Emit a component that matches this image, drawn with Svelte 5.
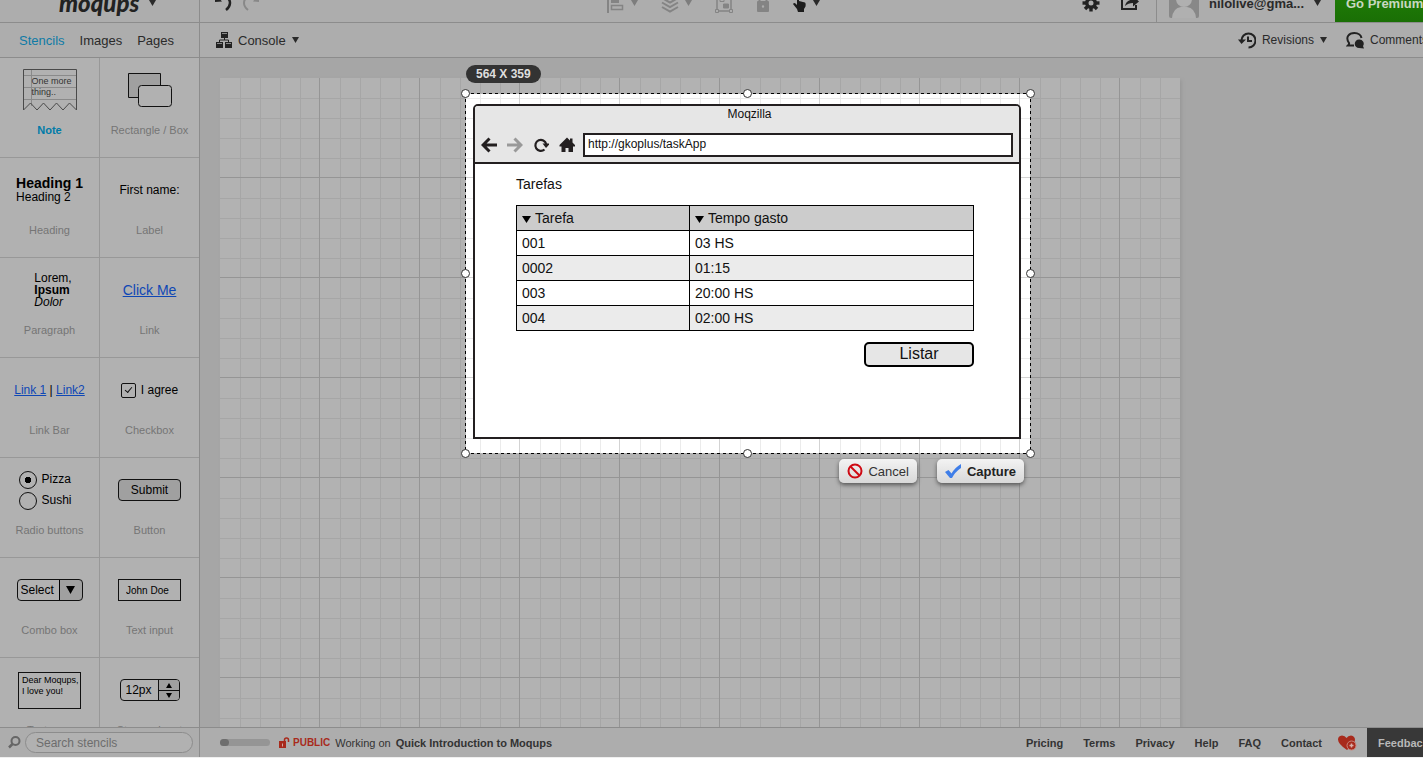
<script lang="ts">
  const rows = [
    ['001', '03 HS'],
    ['0002', '01:15'],
    ['003', '20:00 HS'],
    ['004', '02:00 HS']
  ];
  const handles = ['nw', 'n', 'ne', 'w', 'e', 'sw', 's', 'se'];
  const footerLinks = ['Pricing', 'Terms', 'Privacy', 'Help', 'FAQ', 'Contact'];
</script>

{#snippet caret()}
  <svg class="caret" width="7" height="6" viewBox="0 0 7 6" aria-hidden="true"><path d="M0 0h7L3.500 6z" fill="currentColor" /></svg>
{/snippet}

<div class="viewport">
  <div class="app">
    <aside class="sidebar">
      <div class="brand bar-top">
        <div class="bar-inner brand-inner">
          <span class="logo">moqups</span>
          {@render caret()}
        </div>
      </div>
      <nav class="tabs">
        <a href="#stencils" class="active">Stencils</a>
        <a href="#images">Images</a>
        <a href="#pages">Pages</a>
      </nav>

      <div class="stencils">
        <div class="cell">
          <div class="preview">
            <div class="note">
              <svg width="54" height="44" viewBox="0 0 54 44" fill="none" stroke="#4a4a4a" aria-hidden="true">
                <path d="M1 7.500h52M1 19.500h52M1 31.500h52M8.500 1v37" stroke="#8a8a8a" />
                <path d="M.5 42V1.500h53V42l-7-7-6.500 7-6.500-7-6.500 7-6.500-7-6.500 7-6.500-7z" />
              </svg>
              <span>One more<br />thing..</span>
            </div>
          </div>
          <div class="caption selected">Note</div>
        </div>
        <div class="cell">
          <div class="preview">
            <svg width="46" height="36" viewBox="0 0 46 36" stroke="#111" aria-hidden="true">
              <path d="M1.500 1.500h32v24h-32z" fill="#a0a0a0" />
              <rect x="11.500" y="13.500" width="33" height="21" rx="3" fill="#b1b1b1" />
            </svg>
          </div>
          <div class="caption">Rectangle / Box</div>
        </div>

        <div class="cell">
          <div class="preview"><div class="headings"><b>Heading 1</b><span>Heading 2</span></div></div>
          <div class="caption">Heading</div>
        </div>
        <div class="cell">
          <div class="preview small">First name:</div>
          <div class="caption">Label</div>
        </div>

        <div class="cell">
          <div class="preview"><p class="para">Lorem,<br /><b>Ipsum</b><br /><i>Dolor</i></p></div>
          <div class="caption">Paragraph</div>
        </div>
        <div class="cell">
          <div class="preview"><a class="demo big" href="#link">Click Me</a></div>
          <div class="caption">Link</div>
        </div>

        <div class="cell">
          <div class="preview small"><span><a class="demo" href="#link1">Link 1</a> | <a class="demo" href="#link2">Link2</a></span></div>
          <div class="caption">Link Bar</div>
        </div>
        <div class="cell">
          <div class="preview small">
            <label class="check"><input type="checkbox" checked /><span>I agree</span></label>
          </div>
          <div class="caption">Checkbox</div>
        </div>

        <div class="cell">
          <div class="preview small">
            <div class="radios">
              <label><input type="radio" name="food" checked />Pizza</label>
              <label><input type="radio" name="food" />Sushi</label>
            </div>
          </div>
          <div class="caption">Radio buttons</div>
        </div>
        <div class="cell">
          <div class="preview"><button class="submit" type="button">Submit</button></div>
          <div class="caption">Button</div>
        </div>

        <div class="cell">
          <div class="preview"><select class="combo" aria-label="Combo box"><option>Select</option></select></div>
          <div class="caption">Combo box</div>
        </div>
        <div class="cell">
          <div class="preview"><input class="text-in" aria-label="Text input" value="John Doe" /></div>
          <div class="caption">Text input</div>
        </div>

        <div class="cell">
          <div class="preview"><textarea class="area" aria-label="Text area" value={'Dear Moqups,\nI love you!'}></textarea></div>
          <div class="caption">Text area</div>
        </div>
        <div class="cell">
          <div class="preview">
            <div class="stepper">
              <input aria-label="Size" value="12px" />
              <div>
                <button type="button" aria-label="Increase"><svg width="6" height="5" viewBox="0 0 6 5"><path d="M3 0l3 5H0z" /></svg></button>
                <button type="button" aria-label="Decrease"><svg width="6" height="5" viewBox="0 0 6 5"><path d="M3 5l3-5H0z" /></svg></button>
              </div>
            </div>
          </div>
          <div class="caption">Stepper input</div>
        </div>
      </div>

      <div class="search">
        <svg width="13" height="13" viewBox="0 0 13 13" fill="none" stroke="#666" aria-hidden="true">
          <circle cx="7.500" cy="5" r="4" stroke-width="2" /><path d="M4.500 8L1 11.500" stroke-width="2.500" />
        </svg>
        <input type="search" placeholder="Search stencils" aria-label="Search stencils" />
      </div>
    </aside>

    <div class="main">
      <header class="toolbar bar-top">
        <div class="bar-inner history">
          <button type="button" aria-label="Undo"><svg width="18" height="20" viewBox="0 0 18 20"><path d="M1 0v9l7-.5z" fill="#222" /><path d="M4 4c7-2 12 1 12 6 0 3-1.500 5-4 7" fill="none" stroke="#222" stroke-width="2.500" /></svg></button>
          <button type="button" aria-label="Redo"><svg width="18" height="20" viewBox="0 0 18 20"><path d="M17 0v9l-6-.5z" fill="#888" /><path d="M14 4C7 2 2 5 2 10c0 3 1.500 5 4 7" fill="none" stroke="#888" stroke-width="2" /></svg></button>
        </div>
        <div class="bar-inner arrange">
          <button type="button" class="off" aria-label="Align"><svg width="18" height="20" viewBox="0 0 18 20"><path d="M0 0h2v20H0z" fill="#848484" /><path d="M4 1h8v9H4z" fill="#848484" /><path d="M4.500 12.500h11v4h-11z" fill="none" stroke="#848484" stroke-width="1.500" /></svg>{@render caret()}</button>
          <button type="button" class="off" aria-label="Order"><svg width="18" height="20" viewBox="0 0 18 20" fill="none" stroke="#848484" stroke-width="2"><path d="M1 5l8 4.500L17 5M1 9.500L9 14l8-4.500M1 14l8 4.500 8-4.500" /></svg>{@render caret()}</button>
          <button type="button" class="off" aria-label="Group"><svg width="18" height="20" viewBox="0 0 18 20" fill="none" stroke="#848484"><path d="M2 0v18h14V0" stroke-width="1.500" /><path d="M5 4.500h4v4H5z" /><path d="M8.500 11h5v4h-5z" fill="#848484" /><path d="M.5 16.500h3v3h-3zM14.500 16.500h3v3h-3z" fill="#acacac" /></svg></button>
          <button type="button" class="off" aria-label="Lock"><svg width="14" height="20" viewBox="0 0 14 20"><path d="M3.500 9V5a3.500 3.500 0 0 1 7 0v4" fill="none" stroke="#848484" stroke-width="2" /><rect x="1" y="8" width="12" height="11" rx="1" fill="#848484" /><circle cx="7" cy="13.500" r="1.200" fill="#adadad" /></svg></button>
          <button type="button" aria-label="Interact"><svg width="14" height="20" viewBox="0 0 14 20"><path d="M4 2q1.500-1 2 0v6l6 1.500q1 .5.500 4l-1.500 2.500v3H5l-1-3-4-5q1-1.500 2.500-.5L4 12z" fill="#1d1d1d" /></svg>{@render caret()}</button>
        </div>
        <div class="bar-inner account">
          <button type="button" aria-label="Settings"><svg width="18" height="18" viewBox="-9 -9 18 18" aria-hidden="true"><g fill="#222"><path d="M-1.700-8.500h3.400v17h-3.400z" /><path d="M-1.700-8.500h3.400v17h-3.400z" transform="rotate(45)" /><path d="M-1.700-8.500h3.400v17h-3.400z" transform="rotate(90)" /><path d="M-1.700-8.500h3.400v17h-3.400z" transform="rotate(135)" /><circle r="6" /></g><circle r="2.500" fill="#adadad" /></svg></button>
          <button type="button" aria-label="Share"><svg width="20" height="20" viewBox="0 0 20 20"><path d="M6 6H2v10h14v-4" fill="none" stroke="#222" stroke-width="2" /><path d="M5 13q1-6 8-6.500V3l6 5.500-6 5V10q-5 0-8 3z" fill="#222" /></svg></button>
        </div>
        <div class="bar-inner user">
          <svg width="30" height="32" viewBox="0 0 30 32" aria-hidden="true"><rect width="30" height="31" rx="2" fill="#888" /><circle cx="15" cy="12" r="8" fill="#b0b0b0" /><path d="M3 31q1-10 9-11h6q8 1 9 11z" fill="#b0b0b0" /></svg>
          <span>nilolive@gma...</span>
          {@render caret()}
        </div>
        <a class="premium" href="#premium"><span class="bar-inner">Go Premium</span></a>
      </header>

      <div class="pagebar">
        <button type="button">
          <svg width="16" height="16" viewBox="0 0 16 16" fill="#222" aria-hidden="true"><path d="M5 0h7v6H5zM0 10h7v6H0zM9 10h7v6H9z" /><path d="M8.500 6v2M3.500 10V8h9v2" fill="none" stroke="#222" /><path d="M6 1.500h5M1 11.500h5M10 11.500h5" stroke="#888" /></svg>
          <span class="page-name">Console</span>
          {@render caret()}
        </button>
        <span class="spacer"></span>
        <button type="button">
          <svg width="18" height="17" viewBox="0 0 18 17" aria-hidden="true"><path d="M3.500 8.500a7 7 0 1 1 7 7" fill="none" stroke="#222" stroke-width="2" /><path d="M0 7.500h8L3.500 12z" fill="#222" /><path d="M10 4.500V9h4" fill="none" stroke="#222" stroke-width="2" /></svg>
          <span>Revisions</span>
          {@render caret()}
        </button>
        <button type="button">
          <svg width="18" height="17" viewBox="0 0 18 17" aria-hidden="true"><path d="M8 13.500H2q1.500-1.500 1-2.500C-1 5 3 1 8.500 1c4 0 6.500 2.500 7 5" fill="none" stroke="#222" stroke-width="2" /><path d="M13 7.500a4.200 4.200 0 0 1 4 6.500l1 2.500-5-.5a4.200 4.200 0 0 1 0-8.500z" fill="#222" /></svg>
          <span>Comments</span>
        </button>
      </div>

      <div class="canvas">
        <div class="paper">
          <div class="selection">
            <output class="size">564 X 359</output>
            <section class="window">
              <div class="window-head">
                <div class="window-title">Moqzilla</div>
                <div class="nav">
                  <div class="nav-icons">
                    <svg width="16" height="16" viewBox="0 0 16 16" fill="none" stroke="#231f20" stroke-width="3" aria-hidden="true"><path d="M16 8H2M8.500 1.500L2 8l6.500 6.500" /></svg>
                    <svg width="16" height="16" viewBox="0 0 16 16" fill="none" stroke="#999" stroke-width="3" aria-hidden="true"><path d="M0 8h14M7.500 1.500L14 8l-6.500 6.500" /></svg>
                    <svg width="16" height="16" viewBox="0 0 16 16" aria-hidden="true"><path d="M11.500 12.500A5.500 5.500 0 1 1 13.200 7" fill="none" stroke="#231f20" stroke-width="2.200" /><path d="M9.500 6.500H17L13 11z" fill="#231f20" /></svg>
                    <svg width="16" height="16" viewBox="0 0 16 16" fill="#231f20" aria-hidden="true"><path d="M8 .5l3 3V1.500h2.500v4L16 8v1.500h-2V15H9.500v-4h-3v4H2.500V9.500H.5V8z" /></svg>
                  </div>
                  <input type="text" aria-label="Address" value="http://gkoplus/taskApp" />
                </div>
              </div>
              <div class="window-body">
                <h2>Tarefas</h2>
                <table>
                  <thead>
                    <tr>
                      <th class="task"><svg width="9" height="7" viewBox="0 0 9 7" aria-hidden="true"><path d="M0 0h9L4.500 7z" /></svg>Tarefa</th>
                      <th><svg width="9" height="7" viewBox="0 0 9 7" aria-hidden="true"><path d="M0 0h9L4.500 7z" /></svg>Tempo gasto</th>
                    </tr>
                  </thead>
                  <tbody>
                    {#each rows as [task, time]}
                      <tr><td>{task}</td><td>{time}</td></tr>
                    {/each}
                  </tbody>
                </table>
                <button type="button" class="list">Listar</button>
              </div>
            </section>
            {#each handles as handle}
              <span class="handle {handle}"></span>
            {/each}
            <div class="actions">
              <button type="button">
                <svg width="16" height="16" viewBox="0 0 16 16" fill="none" stroke="#cf0a14" stroke-width="2" aria-hidden="true"><circle cx="8" cy="8" r="6.500" /><path d="M3.500 3.500l9 9" /></svg>
                Cancel
              </button>
              <button type="button" class="primary">
                <svg width="17" height="16" viewBox="0 0 17 16" aria-hidden="true"><path d="M0 9l3.500-2 3 3.500Q10 4.500 16 1v4Q10 9 7 15H5z" fill="#3f7ee8" /></svg>
                Capture
              </button>
            </div>
          </div>
        </div>
      </div>

      <footer>
        <input class="zoom" type="range" aria-label="Zoom" min="0" max="100" value="0" />
        <svg class="lock" width="11" height="11" viewBox="0 0 11 11" aria-hidden="true"><path d="M0 4h7v7H0z" fill="#a82a1c" /><path d="M5.500 5V3a2 2 0 0 1 4 0v2" fill="none" stroke="#a82a1c" stroke-width="1.500" /><path d="M3.500 6.500v3" stroke="#d0a8a4" /></svg>
        <span class="public">PUBLIC</span>
        <span class="working">Working on</span>
        <b>Quick Introduction to Moqups</b>
        <span class="spacer"></span>
        <nav>
          {#each footerLinks as link}
            <a href="#{link.toLowerCase()}">{link}</a>
          {/each}
        </nav>
        <svg class="heart" width="19" height="16" viewBox="0 0 19 16" aria-hidden="true"><path d="M9 15Q0 9 0 4.500 0 1 4 .5q3 0 4.500 2.500Q10 .5 13 .5q4 .5 4 4.500 0 4-8 10z" fill="#a82a1c" /><circle cx="13.500" cy="10.500" r="4.500" fill="#a82a1c" stroke="#c9877f" /><path d="M13.500 8.500v4M11.500 10.500h4" stroke="#d8b0aa" stroke-width="1.500" /></svg>
        <button type="button" class="feedback">Feedback</button>
      </footer>
    </div>
  </div>
</div>

<style>
  :global(body) {
    background: #efefef;
  }
  .viewport {
    overflow: hidden;
    height: calc(100vh - 1px);
    font-family: "Liberation Sans", Arial, sans-serif;
    font-size: 12px;
    color: #2a2a2a;
  }
  .app {
    display: grid;
    grid-template-columns: 200px minmax(0, 1fr);
    width: calc(100% + 20px);
    height: 100%;
  }
  button, input, select, textarea {
    font: inherit;
    color: inherit;
    margin: 0;
    padding: 0;
    border: 0;
    background: none;
    border-radius: 0;
    box-sizing: border-box;
    appearance: none;
    outline: 0;
  }
  a {
    color: inherit;
    text-decoration: none;
  }
  svg {
    display: block;
    flex: none;
  }
  .spacer {
    flex: 1;
  }

  /* Sidebar */
  .sidebar {
    display: grid;
    grid-template-columns: minmax(0, 1fr);
    grid-template-rows: auto auto minmax(0, 1fr) auto;
    height: 100%;
    min-height: 0;
    box-sizing: border-box;
    border-right: 1px solid #8c8c8c;
    background: #adadad;
  }
  .bar-top {
    display: flex;
    align-items: flex-end;
    height: 22px;
    overflow: hidden;
    border-bottom: 1px solid #8c8c8c;
  }
  .bar-inner {
    display: flex;
    align-items: center;
    height: 38px;
    flex: none;
  }
  .brand-inner {
    width: 100%;
    padding-left: 59px;
    gap: 10px;
    box-sizing: border-box;
  }
  .logo {
    font: italic 900 24px/32px Lato, sans-serif;
    color: #222;
  }
  .tabs {
    display: flex;
    align-items: center;
    height: 34px;
    gap: 15px;
    padding-left: 19px;
    border-bottom: 1px solid #8c8c8c;
    font-size: 13px;
  }
  .tabs .active {
    color: #0f7ba6;
  }
  .stencils {
    display: grid;
    grid-template-columns: 100px minmax(0, 1fr);
    grid-auto-rows: 100px;
    overflow: hidden;
    background: #b1b1b1;
    color: #000;
  }
  .cell {
    box-sizing: border-box;
    border-bottom: 1px solid #989898;
  }
  .cell:nth-child(odd) {
    border-right: 1px solid #989898;
  }
  .preview {
    display: flex;
    align-items: center;
    justify-content: center;
    height: 64px;
  }
  .preview.small {
    font-size: 12px;
  }
  .caption {
    line-height: 16px;
    font-size: 11px;
    text-align: center;
    color: #757575;
  }
  .caption.selected {
    font-weight: bold;
    color: #007ba8;
  }
  .note {
    display: grid;
  }
  .note > * {
    grid-area: 1 / 1;
  }
  .note span {
    padding: 8px 0 0 9px;
    font-size: 9px;
    line-height: 11px;
    color: #333;
  }
  .headings {
    display: grid;
    line-height: 14px;
    font-size: 12px;
  }
  .headings b {
    font-size: 14px;
  }
  .para {
    margin: 0;
    padding-left: 7px;
    line-height: 12px;
  }
  .demo {
    color: #0f47b5;
    text-decoration: underline;
  }
  .demo.big {
    font-size: 14px;
  }
  .check {
    display: flex;
    align-items: center;
    gap: 5px;
  }
  .check input {
    width: 15px;
    height: 15px;
    border: 1px solid #111;
    border-radius: 2px;
    display: grid;
    place-items: center;
  }
  .check input:checked::after {
    content: "";
    width: 6px;
    height: 3px;
    border: solid #111;
    border-width: 0 0 1px 1px;
    transform: translateY(-1px) rotate(-50deg);
  }
  .radios {
    display: grid;
    gap: 3px;
    padding-right: 8px;
  }
  .radios label {
    display: flex;
    align-items: center;
    gap: 4px;
    line-height: 17px;
  }
  .radios input {
    width: 18px;
    height: 18px;
    border: 1px solid #111;
    border-radius: 50%;
  }
  .radios input:checked {
    background: radial-gradient(circle, #000 0 3px, transparent 3px);
  }
  .submit {
    width: 63px;
    height: 22px;
    border: 1px solid #111;
    border-radius: 4px;
    background: #a0a0a0;
  }
  .combo {
    width: 66px;
    height: 22px;
    padding: 0 3px;
    border: 1px solid #111;
    border-radius: 4px;
    background: url("data:image/svg+xml,%3Csvg xmlns='http://www.w3.org/2000/svg' width='23' height='20'%3E%3Cpath d='M0 0h23v20H0z' fill='%23a0a0a0'/%3E%3Cpath d='M0 0h1v20H0zM7 6h9l-4.500 8z'/%3E%3C/svg%3E") right / 23px 20px no-repeat;
  }
  .text-in {
    width: 63px;
    height: 22px;
    padding: 0 7px;
    border: 1px solid #111;
    font-size: 10px;
  }
  .area {
    width: 63px;
    height: 37px;
    padding: 2px 3px;
    border: 1px solid #111;
    overflow: hidden;
    resize: none;
    white-space: pre;
    font-size: 9px;
    line-height: 11px;
  }
  .stepper {
    display: flex;
    width: 60px;
    height: 22px;
    box-sizing: border-box;
    border: 1px solid #111;
    border-radius: 4px;
    overflow: hidden;
  }
  .stepper input {
    width: 37px;
    padding-left: 5px;
  }
  .stepper div {
    flex: 1;
    display: grid;
    grid-template-rows: 1fr 1fr;
    border-left: 1px solid #111;
    background: #a0a0a0;
  }
  .stepper button {
    display: grid;
    place-items: center;
  }
  .stepper button + button {
    border-top: 1px solid #111;
  }
  .search {
    display: flex;
    align-items: center;
    height: 29px;
    gap: 4px;
    padding: 0 6px 0 8px;
    border-top: 1px solid #8c8c8c;
  }
  .search input {
    flex: 1;
    min-width: 0;
    height: 21px;
    padding: 0 10px;
    border: 1px solid #8c8c8c;
    border-radius: 11px;
    background: #b1b1b1;
  }
  .search input::placeholder {
    color: #6d6d6d;
    opacity: 1;
  }

  /* Toolbars */
  .main {
    display: flex;
    flex-direction: column;
    min-width: 0;
    min-height: 0;
    background: #adadad;
  }
  .history {
    padding-left: 14px;
    gap: 10px;
    flex: 1;
  }
  .arrange {
    gap: 23px;
    margin-right: 262px;
  }
  .arrange button {
    display: flex;
    align-items: center;
    gap: 6px;
  }
  .off {
    color: #7d7d7d;
  }
  .account {
    gap: 20px;
    padding-right: 16px;
  }
  .user {
    border-left: 1px solid #8c8c8c;
    padding: 0 14px 0 12px;
    gap: 10px;
    font-size: 13px;
    font-weight: bold;
  }
  .premium {
    display: flex;
    width: 108px;
    padding-left: 11px;
    box-sizing: border-box;
    background: linear-gradient(#218208, #1a6f05);
    font-size: 13px;
    font-weight: bold;
    color: #c8d8c0;
  }
  .pagebar {
    display: flex;
    align-items: center;
    height: 34px;
    flex: none;
    gap: 19px;
    padding: 0 15px 0 16px;
    border-bottom: 1px solid #8c8c8c;
  }
  .pagebar button {
    display: flex;
    align-items: center;
    gap: 6px;
  }
  .page-name {
    font-size: 13px;
  }

  /* Canvas */
  .canvas {
    flex: 1;
    min-height: 0;
    display: flex;
    padding: 20px 20px 0;
    overflow: hidden;
    background: #a6a6a6;
  }
  .paper {
    --minor: #a6a6a6;
    --major: #959595;
    position: relative;
    width: 960px;
    flex: none;
    background-color: #b2b2b2;
    box-shadow: 2px 2px 3px #9a9a9a;
  }
  .paper, .selection {
    background-image:
      linear-gradient(90deg, transparent 99px, var(--major) 0),
      linear-gradient(transparent 99px, var(--major) 0),
      linear-gradient(90deg, transparent 20px, var(--minor) 0 21px, transparent 0 40px, var(--minor) 0 41px, transparent 0 60px, var(--minor) 0 61px, transparent 0 80px, var(--minor) 0 81px, transparent 0),
      linear-gradient(transparent 20px, var(--minor) 0 21px, transparent 0 40px, var(--minor) 0 41px, transparent 0 60px, var(--minor) 0 61px, transparent 0 80px, var(--minor) 0 81px, transparent 0);
    background-size: 100px 100px;
  }
  .selection {
    --minor: #ebebeb;
    --major: #d3d3d3;
    position: absolute;
    left: 245px;
    top: 15px;
    width: 566px;
    height: 361px;
    box-sizing: border-box;
    padding: 11px 10px 15px 8px;
    background-color: #fff;
    background-position: -45px -15px;
  }
  .selection::before {
    content: "";
    position: absolute;
    inset: 0;
    pointer-events: none;
    background:
      repeating-linear-gradient(90deg, #000 0 3px, #b2b2b2 3px 6px) top / 100% 1px no-repeat,
      repeating-linear-gradient(90deg, #000 0 3px, #b2b2b2 3px 6px) bottom / 100% 1px no-repeat,
      repeating-linear-gradient(#000 0 3px, #b2b2b2 3px 6px) left / 1px 100% no-repeat,
      repeating-linear-gradient(#000 0 3px, #b2b2b2 3px 6px) right / 1px 100% no-repeat;
  }
  .size {
    position: absolute;
    left: 1px;
    top: -28px;
    padding: 0 10px;
    border-radius: 9px;
    background: #333;
    line-height: 18px;
    font-weight: bold;
    color: #dedede;
  }
  .handle {
    position: absolute;
    left: 50%;
    top: 50%;
    width: 9px;
    height: 9px;
    margin: -5px;
    box-sizing: border-box;
    border: 1px solid #333;
    border-radius: 50%;
    background: #fff;
  }
  .nw, .n, .ne { top: 1px; }
  .sw, .s, .se { top: 100%; }
  .nw, .w, .sw { left: 1px; }
  .ne, .e, .se { left: 100%; }
  .actions {
    position: absolute;
    right: 7px;
    top: 366px;
    display: flex;
    gap: 20px;
  }
  .actions button {
    display: flex;
    align-items: center;
    gap: 5px;
    height: 24px;
    padding: 0 8px;
    border-radius: 5px;
    background: linear-gradient(#f3f3f3, #d8d8d8);
    box-shadow: 0 2px 4px #555;
    font-size: 13px;
    color: #333;
  }
  .actions .primary {
    font-weight: bold;
    color: #222;
  }

  /* Browser mock */
  .window {
    display: flex;
    flex-direction: column;
    height: 100%;
    box-sizing: border-box;
    border: 2px solid #231f20;
    border-radius: 5px 5px 0 0;
    background: #fff;
    color: #111;
  }
  .window-head {
    padding-bottom: 5px;
    border-bottom: 2px solid #231f20;
    border-radius: 3px 3px 0 0;
    background: #e6e6e6;
  }
  .window-title {
    line-height: 16px;
    text-align: center;
    padding: 0 0 11px 5px;
  }
  .nav {
    display: flex;
    align-items: center;
    gap: 8px;
    padding: 0 6px;
  }
  .nav-icons {
    display: flex;
    gap: 10px;
  }
  .nav input {
    flex: 1;
    min-width: 0;
    height: 24px;
    padding: 0 3px 2px;
    border: 2px solid #231f20;
    background: #fff;
  }
  .window-body {
    display: flex;
    flex-direction: column;
    padding: 10px 45px 0 41px;
    font-size: 14px;
  }
  h2 {
    margin: 0 0 11px;
    font-size: 14px;
    line-height: 20px;
    font-weight: normal;
  }
  table {
    width: 100%;
    table-layout: fixed;
    border-collapse: collapse;
  }
  th, td {
    height: 24px;
    padding: 0 5px;
    border: 1px solid #000;
    font-weight: normal;
    text-align: left;
  }
  th {
    background: #ccc;
  }
  th svg {
    display: inline-block;
    margin-right: 4px;
  }
  .task {
    width: 162px;
  }
  tbody tr:nth-child(even) {
    background: #ebebeb;
  }
  .list {
    align-self: flex-end;
    width: 110px;
    height: 25px;
    margin-top: 11px;
    padding-bottom: 2px;
    border: 2px solid #000;
    border-radius: 5px;
    background: #e6e6e6;
    font-size: 16px;
  }

  /* Footer */
  footer {
    display: flex;
    align-items: center;
    flex: none;
    height: 29px;
    padding-left: 20px;
    border-top: 1px solid #8c8c8c;
    font-size: 11px;
    color: #333;
  }
  .zoom {
    width: 50px;
    height: 7px;
    margin-right: 9px;
    border-radius: 4px;
    background: #959595;
  }
  .zoom::-webkit-slider-thumb {
    appearance: none;
    width: 9px;
    height: 7px;
    border-radius: 4px;
    background: #6e6e6e;
  }
  .public {
    margin: 0 5px 0 3px;
    font-size: 10px;
    font-weight: bold;
    color: #a82a1c;
  }
  .working {
    margin-right: 5px;
    color: #333;
  }
  footer nav {
    display: flex;
    gap: 20px;
    font-weight: bold;
  }
  .heart {
    margin: 0 10px 0 16px;
  }
  .feedback {
    align-self: stretch;
    width: 76px;
    padding-left: 11px;
    background: #383838;
    text-align: left;
    font-weight: bold;
    color: #b8b8b8;
  }
</style>
